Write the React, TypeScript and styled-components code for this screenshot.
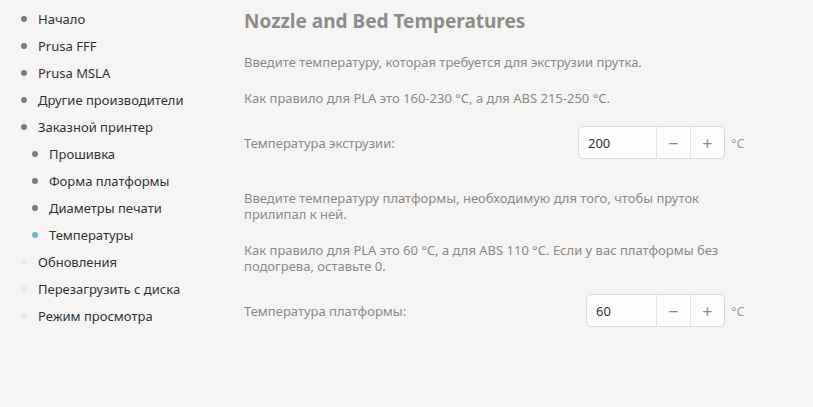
import React from 'react';
import styled, { createGlobalStyle } from 'styled-components';

const GlobalStyle = createGlobalStyle`
  html, body {
    margin: 0;
    padding: 0;
    background: #f6f5f4;
  }
  body {
    font-family: "Noto Sans", "Open Sans", sans-serif;
    font-size: 13px;
  }
`;

const Page = styled.div`
  display: flex;
  width: 813px;
  height: 407px;
  background: #f6f5f4;
  overflow: hidden;
`;

const Sidebar = styled.ul`
  list-style: none;
  margin: 0;
  padding: 5px 0 0 0;
  width: 244px;
  flex-shrink: 0;
`;

const NavItem = styled.li<{ $level: number }>`
  display: flex;
  align-items: center;
  height: 27px;
  padding-left: ${(p) => (p.$level === 1 ? 32 : 21)}px;
  color: #2e3436;
  font-size: 13px;
`;

const Bullet = styled.span<{ $state: 'done' | 'active' | 'todo' }>`
  width: 6px;
  height: 6px;
  border-radius: 50%;
  margin-right: 11px;
  background: ${(p) =>
    p.$state === 'active' ? '#6fb5dc' : p.$state === 'done' ? '#7d7d7d' : '#ebeae8'};
`;

const Content = styled.div`
  display: flex;
  flex-direction: column;
  gap: 20px;
  width: 500px;
  padding-top: 8px;
  color: #8a8a8a;
`;

const Title = styled.h1`
  margin: 0;
  font-size: 19px;
  line-height: 26px;
  font-weight: 700;
  color: #8c8c8c;
`;

const Para = styled.p`
  margin: 0;
  font-size: 13px;
  line-height: 16px;
  width: 480px;
`;

const FormRow = styled.div<{ $after?: number }>`
  display: flex;
  align-items: center;
  margin-bottom: ${(p) => p.$after ?? 0}px;
`;

const Label = styled.span`
  flex: 1;
  font-size: 13px;
`;

const SpinBox = styled.div`
  display: flex;
  height: 31px;
  border: 1px solid #dcd9d6;
  border-radius: 5px;
  background: #fdfdfd;
  overflow: hidden;
`;

const SpinEntry = styled.div<{ $width: number }>`
  width: ${(p) => p.$width}px;
  display: flex;
  align-items: center;
  padding-left: 9px;
  box-sizing: border-box;
  color: #2e3436;
  font-size: 13px;
`;

const SpinButton = styled.div`
  width: 34px;
  display: flex;
  align-items: center;
  justify-content: center;
  border-left: 1px solid #e6e4e1;
  color: #8a8a8a;
  font-size: 18px;
  box-sizing: border-box;
`;

const Unit = styled.span`
  margin-left: 6px;
  width: 13px;
  font-size: 13px;
  color: #9a9a9a;
`;

const nav: { label: string; level: number; state: 'done' | 'active' | 'todo' }[] = [
  { label: 'Начало', level: 0, state: 'done' },
  { label: 'Prusa FFF', level: 0, state: 'done' },
  { label: 'Prusa MSLA', level: 0, state: 'done' },
  { label: 'Другие производители', level: 0, state: 'done' },
  { label: 'Заказной принтер', level: 0, state: 'done' },
  { label: 'Прошивка', level: 1, state: 'done' },
  { label: 'Форма платформы', level: 1, state: 'done' },
  { label: 'Диаметры печати', level: 1, state: 'done' },
  { label: 'Температуры', level: 1, state: 'active' },
  { label: 'Обновления', level: 0, state: 'todo' },
  { label: 'Перезагрузить с диска', level: 0, state: 'todo' },
  { label: 'Режим просмотра', level: 0, state: 'todo' },
];

const Spin: React.FC<{ value: string; width: number }> = ({ value, width }) => (
  <>
    <SpinBox>
      <SpinEntry $width={width}>{value}</SpinEntry>
      <SpinButton>−</SpinButton>
      <SpinButton>+</SpinButton>
    </SpinBox>
    <Unit>°C</Unit>
  </>
);

const App: React.FC = () => (
  <Page>
    <GlobalStyle />
    <Sidebar>
      {nav.map((item) => (
        <NavItem key={item.label} $level={item.level}>
          <Bullet $state={item.state} />
          {item.label}
        </NavItem>
      ))}
    </Sidebar>
    <Content>
      <Title>Nozzle and Bed Temperatures</Title>
      <Para>Введите температуру, которая требуется для экструзии прутка.</Para>
      <Para>Как правило для PLA это 160-230 °C, а для ABS 215-250 °C.</Para>
      <FormRow $after={11}>
        <Label>Температура экструзии:</Label>
        <Spin value="200" width={77} />
      </FormRow>
      <Para>
        Введите температуру платформы, необходимую для того, чтобы пруток прилипал к ней.
      </Para>
      <Para>
        Как правило для PLA это 60 °C, а для ABS 110 °C. Если у вас платформы без подогрева,
        оставьте 0.
      </Para>
      <FormRow>
        <Label>Температура платформы:</Label>
        <Spin value="60" width={69} />
      </FormRow>
    </Content>
  </Page>
);

export default App;
